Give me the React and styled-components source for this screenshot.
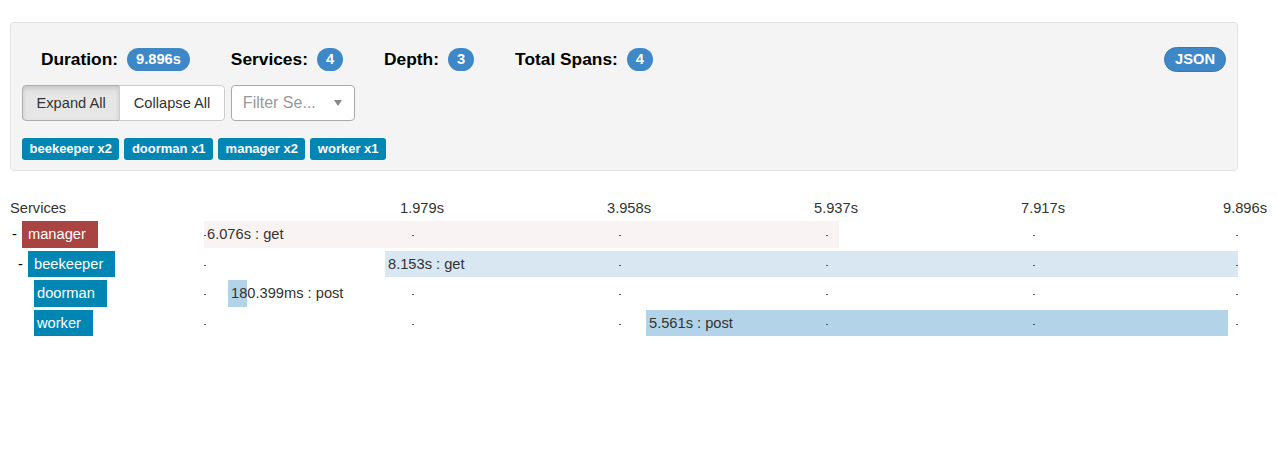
import React from 'react';
import styled, { createGlobalStyle } from 'styled-components';

const GlobalStyle = createGlobalStyle`
  html, body { margin: 0; padding: 0; background: #fff; }
  body {
    font-family: "Liberation Sans", Arial, sans-serif;
    color: #333;
  }
  * { box-sizing: border-box; }
`;

const TOTAL = 9.896;

const Well = styled.div`
  margin: 22px 40px 0 10px;
  background: #f4f4f4;
  border: 1px solid #e3e3e3;
  border-radius: 4px;
  padding: 23px 11px 10px 11px;
`;

const SummaryRow = styled.div`
  display: flex;
  align-items: center;
  height: 26px;
  padding-left: 19px;
`;

const SummaryItem = styled.div`
  display: flex;
  align-items: center;
  margin-right: 41px;
`;

const SummaryLabel = styled.span`
  font-size: 13pt;
  font-weight: bold;
  color: #000;
`;

const Pill = styled.span`
  display: inline-block;
  margin-left: 9px;
  height: 23px;
  line-height: 23px;
  padding: 0 9px;
  border-radius: 12px;
  background: #3e88c8;
  color: #fff;
  font-size: 11pt;
  font-weight: bold;
`;

const JsonButton = styled.button`
  margin-left: auto;
  height: 25px;
  padding: 0 10px;
  border: 1px solid #3779b4;
  border-radius: 13px;
  background: #3e88c8;
  color: #fff;
  font-family: inherit;
  font-size: 11pt;
  font-weight: bold;
  line-height: 23px;
  cursor: pointer;
`;

const ControlsRow = styled.div`
  display: flex;
  align-items: center;
  margin-top: 13px;
  height: 36px;
`;

const ButtonGroup = styled.div`
  display: flex;
  height: 36px;
`;

const GroupButton = styled.button`
  height: 36px;
  padding: 0 13.5px;
  font-family: inherit;
  font-size: 11pt;
  color: #333;
  background: ${(p) => (p.$active ? '#e6e6e6' : '#fff')};
  border: 1px solid ${(p) => (p.$active ? '#adadad' : '#ccc')};
  box-shadow: ${(p) => (p.$active ? 'inset 0 3px 5px rgba(0,0,0,0.125)' : 'none')};
  border-radius: ${(p) => (p.$first ? '4px 0 0 4px' : '0 4px 4px 0')};
  margin-left: ${(p) => (p.$first ? 0 : -1)}px;
  cursor: pointer;
`;

const FilterSelect = styled.div`
  position: relative;
  margin-left: 6px;
  width: 124px;
  height: 36px;
  background: #fff;
  border: 1px solid #aaa;
  border-radius: 4px;
  padding-left: 11px;
  display: flex;
  align-items: center;
  font-size: 12pt;
  color: #999;
`;

const Caret = styled.span`
  position: absolute;
  right: 12px;
  top: 14px;
  width: 0;
  height: 0;
  border-left: 4px solid transparent;
  border-right: 4px solid transparent;
  border-top: 6px solid #888;
`;

const TagRow = styled.div`
  display: flex;
  gap: 5px;
  margin-top: 17px;
`;

const Tag = styled.span`
  height: 22px;
  line-height: 22px;
  padding: 0 7.5px;
  border-radius: 3px;
  background: #0086b3;
  color: #fff;
  font-size: 13px;
  font-weight: bold;
`;

const Timeline = styled.div`
  margin: 27px 39px 0 10px;
  font-size: 11pt;
  color: #333;
`;

const Grid = styled.div`
  display: grid;
  grid-template-columns: 194px 1fr;
  row-gap: 3px;
`;

const HeaderCell = styled.div`
  height: 20px;
  line-height: 20px;
  margin-bottom: -1px;
`;

const Axis = styled.div`
  position: relative;
  height: 20px;
  line-height: 20px;
`;

const AxisLabel = styled.span`
  position: absolute;
  top: 0;
  white-space: nowrap;
`;

const LabelCell = styled.div`
  display: flex;
  align-items: center;
  height: 26.5px;
  padding-left: ${(p) => 2 + p.$depth * 6}px;
`;

const Expander = styled.span`
  width: 10px;
  flex: none;
  color: #000;
  line-height: 26px;
`;

const ServiceName = styled.span`
  height: 26.5px;
  line-height: 26.5px;
  padding: 0 12px 0 ${(p) => (p.$parent ? 6 : 3)}px;
  background: ${(p) => p.$color};
  color: #fff;
  white-space: nowrap;
`;

const Track = styled.div`
  position: relative;
  height: 26.5px;
`;

const Bar = styled.div`
  position: absolute;
  top: 0;
  bottom: 0;
  background: ${(p) => p.$color};
  padding-left: 3px;
  line-height: 26.5px;
  white-space: nowrap;
  color: #333;
`;

const Dot = styled.span`
  position: absolute;
  top: 14px;
  width: 1.5px;
  height: 1px;
  background: #556;
  z-index: 1;
`;

const ticks = [0, 1, 2, 3, 4, 5];
const axisLabels = ['1.979s', '3.958s', '5.937s', '7.917s', '9.896s'];

const rows = [
  { name: 'manager', depth: 0, parent: true, color: '#a94442', bar: '#faf3f3', start: 0, dur: 6.076, text: '6.076s : get' },
  { name: 'beekeeper', depth: 1, parent: true, color: '#0086b3', bar: '#d8e7f2', start: 1.7306, dur: 8.153, text: '8.153s : get' },
  { name: 'doorman', depth: 2, parent: false, color: '#0086b3', bar: '#b2d3e8', start: 0.2295, dur: 0.180399, text: '180.399ms : post' },
  { name: 'worker', depth: 2, parent: false, color: '#0086b3', bar: '#b2d3e8', start: 4.226, dur: 5.561, text: '5.561s : post' },
];

const summary = [
  { label: 'Duration:', value: '9.896s' },
  { label: 'Services:', value: '4' },
  { label: 'Depth:', value: '3' },
  { label: 'Total Spans:', value: '4' },
];

const tags = ['beekeeper x2', 'doorman x1', 'manager x2', 'worker x1'];

export default function App() {
  return (
    <>
      <GlobalStyle />
      <Well>
        <SummaryRow>
          {summary.map((s) => (
            <SummaryItem key={s.label}>
              <SummaryLabel>{s.label}</SummaryLabel>
              <Pill>{s.value}</Pill>
            </SummaryItem>
          ))}
          <JsonButton>JSON</JsonButton>
        </SummaryRow>
        <ControlsRow>
          <ButtonGroup>
            <GroupButton $first $active>Expand All</GroupButton>
            <GroupButton>Collapse All</GroupButton>
          </ButtonGroup>
          <FilterSelect>
            Filter Se...
            <Caret />
          </FilterSelect>
        </ControlsRow>
        <TagRow>
          {tags.map((t) => (
            <Tag key={t}>{t}</Tag>
          ))}
        </TagRow>
      </Well>

      <Timeline>
        <Grid>
          <HeaderCell>Services</HeaderCell>
          <Axis>
            {axisLabels.map((l, i) => {
              const pct = (i + 1) * 20;
              const off = i === 4 ? 16 : 11;
              return (
                <AxisLabel key={l} style={{ left: `calc(${pct}% - ${off}px)` }}>
                  {l}
                </AxisLabel>
              );
            })}
          </Axis>
          {rows.map((r) => (
            <React.Fragment key={r.name}>
              <LabelCell $depth={r.depth}>
                <Expander>{r.parent ? '-' : ''}</Expander>
                <ServiceName $parent={r.parent} $color={r.color}>
                  {r.name}
                </ServiceName>
              </LabelCell>
              <Track>
                <Bar
                  $color={r.bar}
                  style={{
                    left: `${(r.start / TOTAL) * 100}%`,
                    width: `${(r.dur / TOTAL) * 100}%`,
                  }}
                >
                  {r.text}
                </Bar>
                {ticks.map((t) => (
                  <Dot
                    key={t}
                    style={{ left: `calc(${t * 20}% + ${t === 5 ? -3 : t === 0 ? 0 : 1}px)` }}
                  />
                ))}
              </Track>
            </React.Fragment>
          ))}
        </Grid>
      </Timeline>
    </>
  );
}
